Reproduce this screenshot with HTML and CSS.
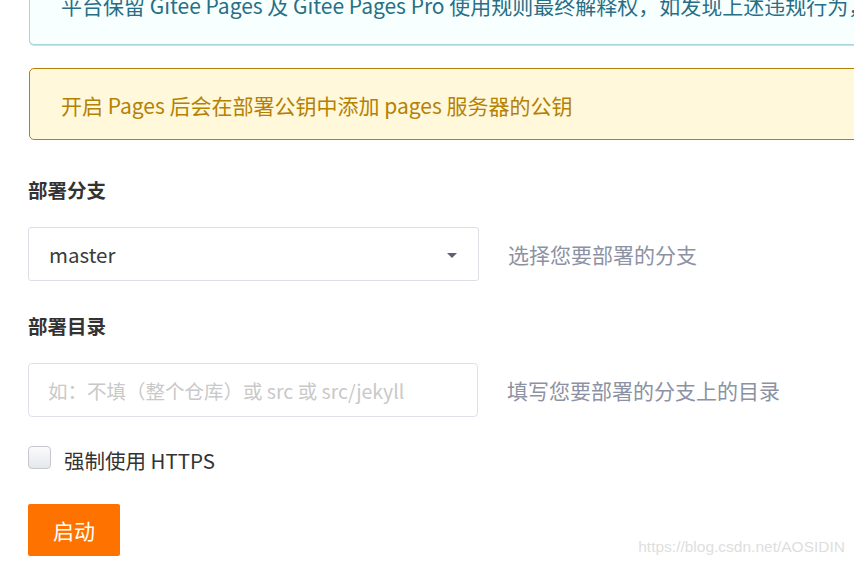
FILE: index.html
```html
<!DOCTYPE html>
<html lang="zh">
<head>
<meta charset="utf-8">
<title>Gitee Pages</title>
<link rel="stylesheet" href="styles.css">
</head>
<body>
<div class="page">
  <div class="message info">平台保留 Gitee Pages 及 Gitee Pages Pro 使用规则最终解释权，如发现上述违规行为，将有权暂停或关闭服务</div>
  <div class="message yellow">开启 Pages 后会在部署公钥中添加 pages 服务器的公钥</div>

  <form class="form">
    <div class="field first">
      <label class="label">部署分支</label>
      <div class="row">
        <div class="select">
          <span class="select-text">master</span>
          <span class="caret"></span>
        </div>
        <span class="help">选择您要部署的分支</span>
      </div>
    </div>

    <div class="field">
      <label class="label">部署目录</label>
      <div class="row">
        <input class="input" type="text" placeholder="如：不填（整个仓库）或 src 或 src/jekyll">
        <span class="help">填写您要部署的分支上的目录</span>
      </div>
    </div>

    <label class="check">
      <span class="box"></span>
      <span class="check-text">强制使用 HTTPS</span>
    </label>

    <button class="btn" type="button">启动</button>
  </form>
</div>
<div class="watermark">https://blog.csdn.net/AOSIDIN</div>
</body>
</html>
```
FILE: styles.css
```css
html, body {
  margin: 0;
  padding: 0;
  background: #fff;
  overflow: hidden;
  width: 854px;
  height: 566px;
}
body {
  font-family: "Noto Sans CJK SC", "Noto Sans", sans-serif;
  color: rgba(0, 0, 0, 0.87);
  position: relative;
}
.page {
  padding-left: 28px;
  width: 1000px;
}
.message {
  box-sizing: border-box;
  margin-left: 1px;
  width: 960px;
  height: 72px;
  padding: 21px 31px;
  font-size: 21px;
  line-height: 30px;
  border-radius: 5px;
  white-space: nowrap;
  overflow: hidden;
}
.message.info {
  margin-top: -27px;
  padding-top: 16px;
  padding-bottom: 26px;
  background: #f8ffff;
  color: #276f86;
  border: 1px solid #a9d5de;
  box-shadow: 0 1px 0 #c4e3ea;
}
.message.yellow {
  margin-top: 23px;
  background: #fff8db;
  color: #b58105;
  border: 1px solid #b58105;
}
.form {
  margin: 0;
}
.field {
  margin-top: 31px;
}
.field.first {
  margin-top: 36px;
}
.label {
  display: block;
  font-size: 19.5px;
  font-weight: bold;
  line-height: 28px;
  color: #333;
  margin-bottom: 23px;
}
.row {
  display: flex;
  align-items: center;
  gap: 29px;
}
.select {
  box-sizing: border-box;
  width: 451px;
  height: 54px;
  border: 1px solid #dce0e6;
  border-radius: 3px;
  display: flex;
  align-items: center;
  padding: 0 21px 0 20px;
  justify-content: space-between;
}
.select-text {
  font-size: 20.5px;
  color: #3a3a3a;
  line-height: 28px;
}
.caret {
  width: 0;
  height: 0;
  border-left: 5px solid transparent;
  border-right: 5px solid transparent;
  border-top: 5px solid #5d6170;
  margin-top: 2px;
}
.help {
  font-size: 21px;
  color: #8c92a4;
  line-height: 28px;
}
.input {
  box-sizing: border-box;
  width: 450px;
  height: 54px;
  border: 1px solid #e1e0ea;
  border-radius: 4px;
  padding: 0 19px;
  font-family: "Noto Sans CJK SC", "Noto Sans", sans-serif;
  font-size: 19.5px;
  outline: none;
  margin: 0;
}
.input::placeholder {
  color: #c9c9c9;
}
.check {
  display: flex;
  align-items: center;
  margin-top: 29px;
  height: 23px;
}
.box {
  box-sizing: border-box;
  width: 23px;
  height: 23px;
  border: 1px solid #c6c8cd;
  border-radius: 4px;
  background: linear-gradient(#fbfbfc, #e6e7eb);
}
.check-text {
  margin-left: 13px;
  font-size: 20.5px;
  line-height: 28px;
  color: #333;
  margin-top: 5px;
}
.btn {
  display: block;
  margin-top: 35px;
  width: 92px;
  height: 52px;
  border: none;
  border-radius: 2px;
  background: #fe7300;
  color: #fff;
  font-family: "Noto Sans CJK SC", "Noto Sans", sans-serif;
  font-size: 21px;
  padding: 0;
}
.watermark {
  position: absolute;
  right: 9px;
  top: 537px;
  font-family: "Liberation Sans", Arial, sans-serif;
  font-size: 15.5px;
  line-height: 20px;
  color: #dedede;
}
```
